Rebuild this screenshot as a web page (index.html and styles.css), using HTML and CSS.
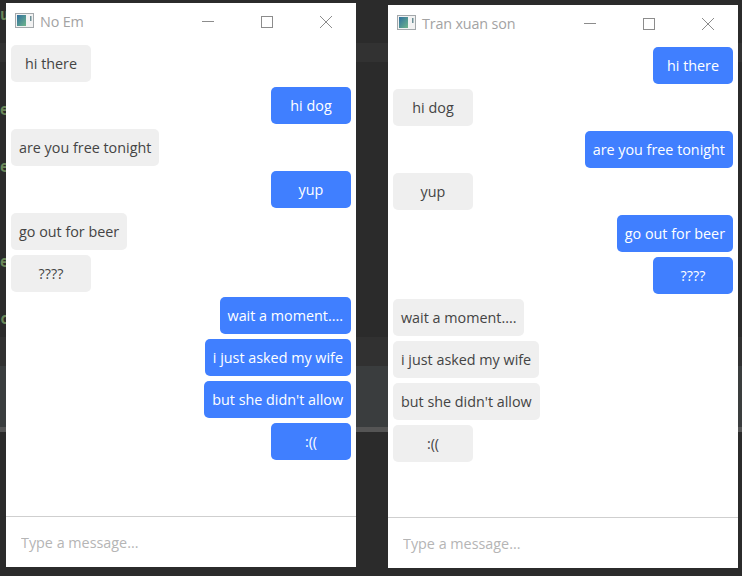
FILE: index.html
```html
<!DOCTYPE html>
<html lang="en">
<head>
  <meta charset="UTF-8">
  <title>Chat</title>
  <link rel="stylesheet" href="styles.css">
</head>
<body>

  <div class="code-bits">
    <span class="bit bit-1">u</span>
    <span class="bit bit-2">e</span>
    <span class="bit bit-3">e</span>
    <span class="bit bit-4">e</span>
    <span class="bit bit-5">c</span>
  </div>

  <div class="window window-left">
    <div class="titlebar">
      <svg class="app-icon" width="19" height="15" viewBox="0 0 19 15">
        <defs>
          <linearGradient id="tile-a" x1="0" y1="0" x2="1" y2="1">
            <stop offset="0" stop-color="#2f6f9f"/>
            <stop offset="1" stop-color="#6fb58a"/>
          </linearGradient>
        </defs>
        <rect x="0.5" y="0.5" width="18" height="14" fill="#f2f2f2" stroke="#a3a8ab"/>
        <rect x="2" y="2" width="9" height="11" fill="url(#tile-a)"/>
        <rect x="15" y="3" width="1.5" height="5" fill="#6d8f96"/>
      </svg>
      <span class="title">No Em</span>
      <div class="controls">
        <div class="control"><svg width="12" height="12" viewBox="0 0 12 12"><path d="M0 5.5H12" stroke="#8c8c8c"/></svg></div>
        <div class="control"><svg width="12" height="12" viewBox="0 0 12 12"><rect x="0.5" y="0.5" width="11" height="11" fill="none" stroke="#8c8c8c"/></svg></div>
        <div class="control"><svg width="12" height="12" viewBox="0 0 12 12"><path d="M0 0L12 12M12 0L0 12" stroke="#8c8c8c" fill="none"/></svg></div>
      </div>
    </div>
    <div class="messages">
      <div class="msg in">hi there</div>
      <div class="msg out">hi dog</div>
      <div class="msg in">are you free tonight</div>
      <div class="msg out">yup</div>
      <div class="msg in">go out for beer</div>
      <div class="msg in">????</div>
      <div class="msg out">wait a moment....</div>
      <div class="msg out">i just asked my wife</div>
      <div class="msg out">but she didn't allow</div>
      <div class="msg out">:((</div>
    </div>
    <div class="composer">
      <input type="text" placeholder="Type a message...">
    </div>
  </div>

  <div class="window window-right">
    <div class="titlebar">
      <svg class="app-icon" width="19" height="15" viewBox="0 0 19 15">
        <defs>
          <linearGradient id="tile-b" x1="0" y1="0" x2="1" y2="1">
            <stop offset="0" stop-color="#2f6f9f"/>
            <stop offset="1" stop-color="#6fb58a"/>
          </linearGradient>
        </defs>
        <rect x="0.5" y="0.5" width="18" height="14" fill="#f2f2f2" stroke="#a3a8ab"/>
        <rect x="2" y="2" width="9" height="11" fill="url(#tile-b)"/>
        <rect x="15" y="3" width="1.5" height="5" fill="#6d8f96"/>
      </svg>
      <span class="title">Tran xuan son</span>
      <div class="controls">
        <div class="control"><svg width="12" height="12" viewBox="0 0 12 12"><path d="M0 5.5H12" stroke="#8c8c8c"/></svg></div>
        <div class="control"><svg width="12" height="12" viewBox="0 0 12 12"><rect x="0.5" y="0.5" width="11" height="11" fill="none" stroke="#8c8c8c"/></svg></div>
        <div class="control"><svg width="12" height="12" viewBox="0 0 12 12"><path d="M0 0L12 12M12 0L0 12" stroke="#8c8c8c" fill="none"/></svg></div>
      </div>
    </div>
    <div class="messages">
      <div class="msg out">hi there</div>
      <div class="msg in">hi dog</div>
      <div class="msg out">are you free tonight</div>
      <div class="msg in">yup</div>
      <div class="msg out">go out for beer</div>
      <div class="msg out">????</div>
      <div class="msg in">wait a moment....</div>
      <div class="msg in">i just asked my wife</div>
      <div class="msg in">but she didn't allow</div>
      <div class="msg in">:((</div>
    </div>
    <div class="composer">
      <input type="text" placeholder="Type a message...">
    </div>
  </div>

</body>
</html>
```

FILE: styles.css
```css
html, body {
  height: 100%;
}
body {
  margin: 0;
  height: 576px;
  overflow: hidden;
  position: relative;
  display: flex;
  align-items: flex-start;
  font-family: "Open Sans", "Noto Sans", sans-serif;
  font-size: 14.35px;
  background:
    linear-gradient(#2b2b2b, #2b2b2b) 0 0 / 100% 43px no-repeat,
    linear-gradient(#323232, #323232) 0 43px / 100% 19px no-repeat,
    linear-gradient(#2b2b2b, #2b2b2b) 0 62px / 100% 275px no-repeat,
    linear-gradient(#313131, #313131) 0 337px / 100% 29px no-repeat,
    linear-gradient(#3a3d3e, #3a3d3e) 0 366px / 100% 61px no-repeat,
    linear-gradient(#555555, #555555) 0 427px / 100% 5px no-repeat,
    #2b2b2b;
}

.bit {
  position: absolute;
  left: 0;
  font-family: "DejaVu Sans Mono", monospace;
  font-size: 15px;
  font-weight: bold;
  color: #6a8759;
}
.bit-1 { top: 6px; }
.bit-2 { top: 101px; }
.bit-3 { top: 158px; }
.bit-4 { top: 253px; }
.bit-5 { top: 310px; }

.window {
  position: relative;
  width: 350px;
  display: flex;
  flex-direction: column;
  background: #fff;
}
.window-left {
  margin-left: 6px;
  margin-top: 3px;
  height: 564px;
}
.window-right {
  margin-left: 32px;
  margin-top: 5px;
  height: 563px;
}

.titlebar {
  height: 42px;
  box-sizing: border-box;
  display: flex;
  align-items: flex-start;
  padding: 10px 0 0 9px;
  flex: none;
}
.app-icon {
  flex: none;
  margin-right: 6px;
}
.title {
  color: #a3a3a3;
  line-height: 17px;
  letter-spacing: -0.15px;
}
.controls {
  margin-left: auto;
  margin-right: 1px;
  margin-top: -10px;
  display: flex;
}
.control {
  width: 59px;
  height: 36px;
  padding-top: 1px;
  box-sizing: border-box;
  display: flex;
  align-items: center;
  justify-content: center;
}
.control:first-child {
  width: 58px;
}

.messages {
  flex: 1;
  display: flex;
  flex-direction: column;
  gap: 5px;
  padding: 0 5px;
}
.msg {
  box-sizing: border-box;
  min-width: 80px;
  height: 37px;
  line-height: 37px;
  padding: 0 8px;
  border-radius: 5px;
  text-align: center;
  white-space: nowrap;
}
.msg.in {
  align-self: flex-start;
  background: #efefef;
  color: #444;
}
.msg.out {
  align-self: flex-end;
  background: #407fff;
  color: #fff;
}

.composer {
  flex: none;
  height: 50px;
  border-top: 1px solid #cfcfcf;
  display: flex;
}
.composer input {
  flex: 1;
  border: none;
  outline: none;
  background: transparent;
  padding: 0 15px;
  font: inherit;
}
.composer input::placeholder {
  color: #b5b5b5;
}
```
